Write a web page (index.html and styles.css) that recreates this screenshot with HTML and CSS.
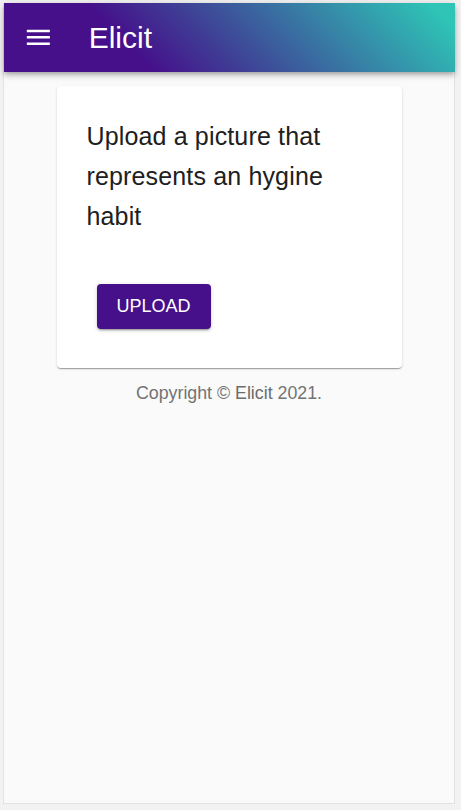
FILE: index.html
```html
<!DOCTYPE html>
<html lang="en">
<head>
<meta charset="utf-8">
<title>Elicit</title>
<link rel="stylesheet" href="styles.css">
</head>
<body>
<div class="frame">
  <header class="appbar">
    <button class="menu-btn" aria-label="menu">
      <svg class="menu-icon" viewBox="0 0 24 24" width="30.7" height="30.7"><path fill="#fff" d="M3 18h18v-2H3v2zm0-5h18v-2H3v2zm0-7v2h18V6H3z"/></svg>
    </button>
    <h1 class="title">Elicit</h1>
  </header>
  <main class="content">
    <section class="card">
      <p class="prompt">Upload a picture that represents an hygine habit</p>
      <div class="actions">
        <button class="upload-btn">UPLOAD</button>
      </div>
    </section>
    <p class="copyright">Copyright © <span class="link">Elicit</span> 2021.</p>
  </main>
</div>
</body>
</html>
```

FILE: styles.css
```css
html, body {
  margin: 0;
  padding: 0;
}
body {
  background: #f2f2f2;
  padding: 3px 6px 6px 3px;
  height: 810px;
  box-sizing: border-box;
  font-family: "Liberation Sans", Arial, sans-serif;
}
.frame {
  height: 100%;
  box-sizing: border-box;
  border: 1px solid #e2e2e2;
  background: #fafafa;
  display: flex;
  flex-direction: column;
}
.appbar {
  margin: -1px -1px 0 0;
  height: 69px;
  flex: none;
  display: flex;
  align-items: center;
  padding-left: 19px;
  background: linear-gradient(45deg, #45108a 29%, #2ec4b6 95%);
  box-shadow: 0 2px 4px -1px rgba(0,0,0,.2), 0 4px 5px 0 rgba(0,0,0,.14), 0 1px 10px 0 rgba(0,0,0,.12);
  position: relative;
  z-index: 1;
}
.menu-btn {
  background: none;
  border: 0;
  padding: 0;
  margin: 0;
  width: 30.7px;
  height: 30.7px;
  display: flex;
}
.menu-icon {
  display: block;
}
.title {
  margin: 0 0 0 35px;
  font-size: 30px;
  font-weight: 400;
  color: #fff;
  line-height: 1;
}
.content {
  display: flex;
  flex-direction: column;
  align-items: center;
}
.card {
  width: 345px;
  box-sizing: border-box;
  margin-top: 14px;
  padding: 30px;
  background: #fff;
  border-radius: 4px;
  box-shadow: 0 2px 1px -1px rgba(0,0,0,.2), 0 1px 1px 0 rgba(0,0,0,.14), 0 1px 3px 0 rgba(0,0,0,.12);
}
.prompt {
  margin: 0;
  font-size: 25px;
  letter-spacing: 0.15px;
  line-height: 40px;
  color: #202020;
}
.actions {
  margin-top: 48px;
  padding-left: 10px;
  padding-bottom: 9px;
  display: flex;
}
.upload-btn {
  height: 45px;
  padding: 0 20px;
  border: 0;
  border-radius: 4px;
  background: #45108a;
  color: #fff;
  font-family: "Liberation Sans", Arial, sans-serif;
  font-size: 18px;
  box-shadow: 0 3px 1px -2px rgba(0,0,0,.2), 0 2px 2px 0 rgba(0,0,0,.14), 0 1px 5px 0 rgba(0,0,0,.12);
}
.copyright {
  margin: 13px 0 0;
  font-size: 17.8px;
  line-height: 24px;
  color: #737373;
}
.link {
  color: #6c6c6c;
}
```
